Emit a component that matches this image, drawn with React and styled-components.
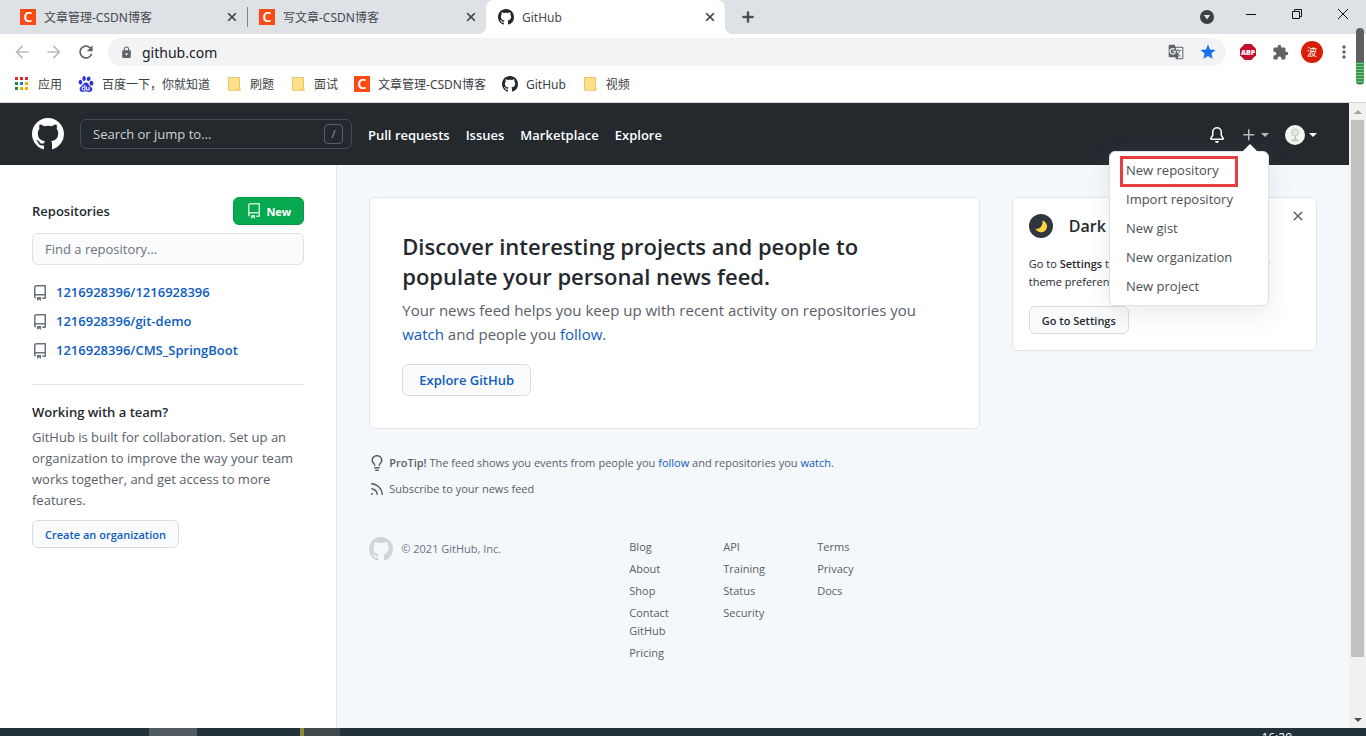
import React from "react";
import styled, { createGlobalStyle } from "styled-components";
import {
    MdAdd,
    MdArrowBack,
    MdArrowForward,
    MdClose,
    MdExtension,
    MdGTranslate,
    MdLock,
    MdMoreVert,
    MdRefresh,
    MdStar,
} from "react-icons/md";
import { SiBaidu } from "react-icons/si";

const tabs = [
    { title: "文章管理-CSDN博客", icon: "csdn" },
    { title: "写文章-CSDN博客", icon: "csdn" },
    { title: "GitHub", icon: "github", active: true },
];

const bookmarks = [
    { title: "应用", icon: "apps" },
    { title: "百度一下，你就知道", icon: "baidu" },
    { title: "刷题", icon: "folder" },
    { title: "面试", icon: "folder" },
    { title: "文章管理-CSDN博客", icon: "csdn" },
    { title: "GitHub", icon: "github" },
    { title: "视频", icon: "folder" },
];

const repos = ["1216928396/1216928396", "1216928396/git-demo", "1216928396/CMS_SpringBoot"];

const menuItems = [
    "New repository",
    "Import repository",
    "New gist",
    "New organization",
    "New project",
];

const footerLinks = [
    ["Blog", "About", "Shop", "Contact GitHub", "Pricing"],
    ["API", "Training", "Status", "Security"],
    ["Terms", "Privacy", "Docs"],
];

const appColors = [
    "#d93025", "#d93025", "#d93025",
    "#1e8e3e", "#1a73e8", "#f9ab00",
    "#1e8e3e", "#f9ab00", "#f9ab00",
];

const iconPaths = {
    github: "M8 0C3.58 0 0 3.58 0 8c0 3.54 2.29 6.53 5.47 7.59.4.07.55-.17.55-.38 0-.19-.01-.82-.01-1.49-2.01.37-2.53-.49-2.69-.94-.09-.23-.48-.94-.82-1.13-.28-.15-.68-.52-.01-.53.63-.01 1.08.58 1.23.82.72 1.21 1.87.87 2.33.66.07-.52.28-.87.51-1.07-1.78-.2-3.64-.89-3.64-3.95 0-.87.31-1.59.82-2.15-.08-.2-.36-1.02.08-2.12 0 0 .67-.21 2.2.82.64-.18 1.32-.27 2-.27s1.36.09 2 .27c1.53-1.04 2.2-.82 2.2-.82.44 1.1.16 1.92.08 2.12.51.56.82 1.27.82 2.15 0 3.07-1.87 3.75-3.65 3.95.29.25.54.73.54 1.48 0 1.07-.01 1.93-.01 2.2 0 .21.15.46.55.38A8.01 8.01 0 0 0 16 8c0-4.42-3.58-8-8-8z",
    repo: "M2 2.5A2.5 2.5 0 014.5 0h8.75a.75.75 0 01.75.75v12.5a.75.75 0 01-.75.75h-2.5a.75.75 0 110-1.5h1.75v-2h-8a1 1 0 00-.714 1.7.75.75 0 01-1.072 1.05A2.495 2.495 0 012 11.5v-9zm10.5-1V9h-8c-.356 0-.694.074-1 .208V2.5a1 1 0 011-1h8zM5 12.25v3.25a.25.25 0 00.4.2l1.45-1.087a.25.25 0 01.3 0L8.6 15.7a.25.25 0 00.4-.2v-3.25a.25.25 0 00-.25-.25h-3.5a.25.25 0 00-.25.25z",
    bell: "M8 16a2 2 0 001.985-1.75c.017-.137-.097-.25-.235-.25h-3.5c-.138 0-.252.113-.235.25A2 2 0 008 16zM8 1.5A3.5 3.5 0 004.5 5v2.947c0 .346-.102.683-.294.97l-1.703 2.556a.018.018 0 00-.003.01l.001.006c0 .002.002.004.004.006a.017.017 0 00.006.004l.007.001h10.964l.007-.001a.016.016 0 00.006-.004.016.016 0 00.004-.006l.001-.007a.017.017 0 00-.003-.01l-1.703-2.554a1.75 1.75 0 01-.294-.97V5A3.5 3.5 0 008 1.5zM3 5a5 5 0 0110 0v2.947c0 .05.015.098.042.139l1.703 2.555A1.518 1.518 0 0113.482 13H2.518a1.518 1.518 0 01-1.263-2.36l1.703-2.554A.25.25 0 003 7.947V5z",
    plus: "M7.75 2a.75.75 0 01.75.75V7h4.25a.75.75 0 110 1.5H8.5v4.25a.75.75 0 11-1.5 0V8.5H2.75a.75.75 0 010-1.5H7V2.75A.75.75 0 017.75 2z",
    rss: "M2.002 2.725a.75.75 0 01.797-.699C8.79 2.42 13.58 7.21 13.974 13.201a.75.75 0 11-1.497.098 10.502 10.502 0 00-9.776-9.776.747.747 0 01-.7-.798zM2 13a1 1 0 112 0 1 1 0 01-2 0zm.84-5.95a.75.75 0 00-.179 1.489c2.509.3 4.5 2.291 4.8 4.8a.75.75 0 101.49-.178A7.003 7.003 0 002.838 7.05z",
    close: "M3.72 3.72a.75.75 0 011.06 0L8 6.94l3.22-3.22a.75.75 0 111.06 1.06L9.06 8l3.22 3.22a.75.75 0 11-1.06 1.06L8 9.06l-3.22 3.22a.75.75 0 01-1.06-1.06L6.94 8 3.72 4.78a.75.75 0 010-1.06z",
    bulb: "M8 1.5c-2.363 0-4 1.69-4 3.75 0 .984.424 1.625.984 2.304l.214.253c.223.264.47.556.673.848.284.411.537.896.621 1.49a.75.75 0 01-1.484.211c-.04-.282-.163-.547-.37-.847a8.695 8.695 0 00-.542-.68c-.084-.1-.173-.205-.268-.32C3.201 7.75 2.5 6.766 2.5 5.25 2.5 2.31 4.863 0 8 0s5.5 2.31 5.5 5.25c0 1.516-.701 2.5-1.328 3.259-.095.115-.184.22-.268.319-.207.245-.383.453-.541.681-.208.3-.33.565-.37.847a.75.75 0 01-1.485-.212c.084-.593.337-1.078.621-1.489.203-.292.45-.584.673-.848.075-.088.147-.173.213-.253.561-.679.985-1.32.985-2.304 0-2.06-1.637-3.75-4-3.75zM6 15.25a.75.75 0 01.75-.75h2.5a.75.75 0 010 1.5h-2.5a.75.75 0 01-.75-.75zM5.75 12a.75.75 0 000 1.5h4.5a.75.75 0 000-1.5h-4.5z",
};

const Octicon = ({ name, size = 16, color = "currentColor" }) => (
    <svg width={size} height={size} viewBox="0 0 16 16" fill={color} aria-hidden="true">
        <path fillRule="evenodd" d={iconPaths[name]} />
    </svg>
);

const SiteIcon = ({ name }) => {
    if (name === "csdn") return <CsdnIcon aria-hidden="true">C</CsdnIcon>;
    if (name === "github") return <Octicon name="github" color="#24292e" />;
    if (name === "baidu") return <SiBaidu size={16} color="#2932e1" />;
    if (name === "apps") {
        return (
            <svg width="16" height="16" viewBox="0 0 16 16">
                {appColors.map((color, i) => (
                    <rect
                        key={i}
                        x={1 + (i % 3) * 5}
                        y={1 + Math.floor(i / 3) * 5}
                        width="3"
                        height="3"
                        fill={color}
                    />
                ))}
            </svg>
        );
    }
    return (
        <svg width="16" height="16" viewBox="0 0 16 16">
            <path d="M2.5 1.5h11v9l.8 3.8H2.5z" fill="#fde08a" stroke="#e8c765" />
            <path d="M12.5 10l1.8 4.3h-3z" fill="#f3cf6b" />
        </svg>
    );
};

const BrowserChrome = () => (
    <Chrome>
        <TabStrip>
            {tabs.map(tab => (
                <Tab key={tab.title} $active={tab.active}>
                    <SiteIcon name={tab.icon} />
                    <TabTitle>{tab.title}</TabTitle>
                    <TabButton aria-label="Close tab">
                        <MdClose size={14} />
                    </TabButton>
                </Tab>
            ))}
            <NewTab aria-label="New tab">
                <MdAdd size={18} />
            </NewTab>
            <TabSearch aria-label="Search tabs">
                <svg width="14" height="14" viewBox="0 0 14 14">
                    <circle cx="7" cy="7" r="7" fill="#3c4043" />
                    <path d="M3.8 5h6.4L7 9.6z" fill="#dee1e6" />
                </svg>
            </TabSearch>
            <WindowButton aria-label="Minimize">
                <svg width="12" height="12" stroke="#111">
                    <path d="M1 6.5h10" />
                </svg>
            </WindowButton>
            <WindowButton aria-label="Restore">
                <svg width="12" height="12" fill="none" stroke="#111">
                    <path d="M1.5 3.5h7v7h-7zM3.5 3.5v-2h7v7h-2" />
                </svg>
            </WindowButton>
            <WindowButton aria-label="Close">
                <svg width="12" height="12" stroke="#111">
                    <path d="M1 1l10 10M11 1L1 11" />
                </svg>
            </WindowButton>
        </TabStrip>
        <Toolbar>
            <ToolButton aria-label="Back" $muted>
                <MdArrowBack size={20} />
            </ToolButton>
            <ToolButton aria-label="Forward" $muted>
                <MdArrowForward size={20} />
            </ToolButton>
            <ToolButton aria-label="Reload">
                <MdRefresh size={20} />
            </ToolButton>
            <AddressBar>
                <MdLock size={13} color="#5f6368" />
                <AddressInput aria-label="Address" defaultValue="github.com" />
                <ToolButton aria-label="Translate">
                    <MdGTranslate size={16} />
                </ToolButton>
                <ToolButton aria-label="Bookmark" $blue>
                    <MdStar size={18} />
                </ToolButton>
            </AddressBar>
            <ToolButton aria-label="Adblock Plus">
                <svg width="16" height="16" viewBox="0 0 16 16">
                    <path d="M4.7 0h6.6L16 4.7v6.6L11.3 16H4.7L0 11.3V4.7z" fill="#c70d2c" />
                    <text
                        x="8"
                        y="11"
                        textAnchor="middle"
                        fontFamily="Open Sans, sans-serif"
                        fontSize="7"
                        fontWeight="800"
                        fill="#fff"
                    >
                        ABP
                    </text>
                </svg>
            </ToolButton>
            <ToolButton aria-label="Extensions">
                <MdExtension size={17} />
            </ToolButton>
            <ToolButton aria-label="Profile">
                <Profile>波</Profile>
            </ToolButton>
            <ToolButton aria-label="More">
                <MdMoreVert size={20} />
            </ToolButton>
        </Toolbar>
        <Bookmarks>
            {bookmarks.map((mark, i) => (
                <Bookmark key={i} href="#">
                    <SiteIcon name={mark.icon} />
                    {mark.title}
                </Bookmark>
            ))}
        </Bookmarks>
        <Meter />
    </Chrome>
);

const Header = () => (
    <HeaderBar>
        <HeaderLink href="#" aria-label="Home">
            <Octicon name="github" size={32} />
        </HeaderLink>
        <SearchBox>
            <SearchInput aria-label="Search" placeholder="Search or jump to…" />
            <SlashKey>/</SlashKey>
        </SearchBox>
        <HeaderNav>
            <HeaderLink href="#">Pull requests</HeaderLink>
            <HeaderLink href="#">Issues</HeaderLink>
            <HeaderLink href="#">Marketplace</HeaderLink>
            <HeaderLink href="#">Explore</HeaderLink>
        </HeaderNav>
        <HeaderActions>
            <HeaderButton aria-label="Notifications">
                <Octicon name="bell" />
            </HeaderButton>
            <CreateWrap>
                <HeaderButton aria-label="Create new" $dim>
                    <Octicon name="plus" />
                    <Caret />
                </HeaderButton>
                <CreateMenu>
                    {menuItems.map((item, i) => (
                        <li key={item}>
                            <MenuLink href="#" $marked={i === 0}>
                                {item}
                            </MenuLink>
                        </li>
                    ))}
                </CreateMenu>
            </CreateWrap>
            <HeaderButton aria-label="Account">
                <svg width="20" height="20" viewBox="0 0 20 20">
                    <circle cx="10" cy="10" r="10" fill="#f4f6f2" />
                    <circle cx="10" cy="7.5" r="3.5" fill="#e3e6df" stroke="#c3c8bf" />
                    <path d="M9 11h2v3H9zM6.5 14h7v2.5h-7z" fill="#c9cdc6" />
                </svg>
                <Caret />
            </HeaderButton>
        </HeaderActions>
    </HeaderBar>
);

const Sidebar = () => (
    <Side>
        <SideTop>
            <SideTitle>Repositories</SideTitle>
            <Button $primary>
                <Octicon name="repo" color="#c8ecd6" />
                New
            </Button>
        </SideTop>
        <FindInput aria-label="Find a repository" placeholder="Find a repository…" />
        <RepoList>
            {repos.map(repo => (
                <RepoItem key={repo}>
                    <Octicon name="repo" color="#6a737d" />
                    <Link href="#">{repo}</Link>
                </RepoItem>
            ))}
        </RepoList>
        <Team>
            <SideTitle>Working with a team?</SideTitle>
            <TeamText>
                GitHub is built for collaboration. Set up an organization to improve the way your
                team works together, and get access to more features.
            </TeamText>
            <Button $link>Create an organization</Button>
        </Team>
    </Side>
);

const Feed = () => (
    <div>
        <Discover>
            <DiscoverTitle>
                Discover interesting projects and people to populate your personal news feed.
            </DiscoverTitle>
            <DiscoverText>
                Your news feed helps you keep up with recent activity on repositories you{" "}
                <Link href="#">watch</Link> and people you <Link href="#">follow</Link>.
            </DiscoverText>
            <Button $link $large>
                Explore GitHub
            </Button>
        </Discover>
        <Tips>
            <Tip>
                <Octicon name="bulb" />
                <span>
                    <strong>ProTip!</strong> The feed shows you events from people you{" "}
                    <Link href="#">follow</Link> and repositories you <Link href="#">watch</Link>.
                </span>
            </Tip>
            <Tip>
                <Octicon name="rss" />
                <MutedLink href="#">Subscribe to your news feed</MutedLink>
            </Tip>
        </Tips>
        <Footer>
            <Copyright>
                <Octicon name="github" size={24} color="#d1d5da" />
                © 2021 GitHub, Inc.
            </Copyright>
            {footerLinks.map(column => (
                <FooterList key={column[0]}>
                    {column.map(item => (
                        <li key={item}>
                            <MutedLink href="#">{item}</MutedLink>
                        </li>
                    ))}
                </FooterList>
            ))}
        </Footer>
    </div>
);

const Notice = () => (
    <NoticeCard>
        <NoticeTop>
            <svg width="24" height="24" viewBox="0 0 24 24">
                <circle cx="12" cy="12" r="12" fill="#2f363d" />
                <path d="M13.5 6.5a6 6 0 1 1-7 8.2c4 .8 7.7-3 7-8.2z" fill="#ffd33d" />
            </svg>
            <NoticeTitle>Dark mode</NoticeTitle>
            <Dismiss aria-label="Dismiss">
                <Octicon name="close" />
            </Dismiss>
        </NoticeTop>
        <NoticeText>
            Go to <strong>Settings</strong> to preview and personalize your theme preference.
        </NoticeText>
        <Button>Go to Settings</Button>
    </NoticeCard>
);

const App = () => (
    <Screen>
        <GlobalStyle />
        <BrowserChrome />
        <Viewport>
            <Page>
                <Header />
                <Body>
                    <Sidebar />
                    <Main>
                        <Feed />
                        <Notice />
                    </Main>
                </Body>
            </Page>
            <Scrollbar>
                <Arrow $up />
                <Thumb />
                <Arrow />
            </Scrollbar>
        </Viewport>
        <Taskbar>
            <TaskItem $left={149} $width={48} $color="#515a60" />
            <TaskItem $left={103} $width={4} $color="#8b8a3c" />
            <TaskItem $left={0} $width={36} $color="#40484c" />
            <Clock>16:20</Clock>
        </Taskbar>
    </Screen>
);

export default App;

const GlobalStyle = createGlobalStyle`
    * {
        box-sizing: border-box;
    }
    body {
        margin: 0;
        color: #24292e;
        font: 13px/21px "Open Sans", "Noto Sans CJK SC", sans-serif;
    }
    button, input {
        font: inherit;
        color: inherit;
        padding: 0;
        border: none;
        background: none;
    }
    ul, h2, h3, p {
        margin: 0;
        padding: 0;
        list-style: none;
    }
    strong {
        font-weight: 600;
    }
    svg {
        flex-shrink: 0;
    }
`;

const Screen = styled.div`
    height: 100vh;
    display: flex;
    flex-direction: column;
    overflow: hidden;
`;

const Chrome = styled.div`
    position: relative;
    flex-shrink: 0;
    background: #fff;
    border-bottom: 1px solid #d5d7da;
    font-family: "Noto Sans", "Noto Sans CJK SC", sans-serif;
`;

const TabStrip = styled.div`
    display: flex;
    height: 34px;
    padding-left: 8px;
    background: #dee1e6;
`;

const Tab = styled.div`
    position: relative;
    display: flex;
    align-items: center;
    gap: 8px;
    width: 239px;
    padding: 0 8px 0 12px;
    font-size: 12px;
    color: #45494d;
    background: ${({ $active }) => ($active ? "#fff" : "none")};
    border-radius: 8px 8px 0 0;

    & + &::before {
        content: "";
        position: absolute;
        left: 0;
        top: 7px;
        width: 1px;
        height: 20px;
        background: ${({ $active }) => ($active ? "none" : "#808388")};
    }

    &::after {
        content: "";
        display: ${({ $active }) => ($active ? "block" : "none")};
        position: absolute;
        inset: auto -8px 0;
        height: 8px;
        background: radial-gradient(circle at 0 0, transparent 8px, #fff 8px) 0 0 / 8px 8px no-repeat,
            radial-gradient(circle at 100% 0, transparent 8px, #fff 8px) 100% 0 / 8px 8px no-repeat;
    }
`;

const TabTitle = styled.span`
    flex: 1;
`;

const TabButton = styled.button`
    display: flex;
    color: #3c4043;

    path:last-child {
        stroke: currentColor;
        stroke-width: 1px;
    }
`;

const NewTab = styled(TabButton)`
    align-items: center;
    margin: 0 auto 0 14px;
`;

const TabSearch = styled.button`
    display: flex;
    align-items: center;
    margin-right: 14px;
`;

const WindowButton = styled.button`
    display: flex;
    align-items: center;
    justify-content: center;
    width: 46px;
    height: 28px;
`;

const Toolbar = styled.div`
    display: flex;
    align-items: center;
    height: 36px;
    padding: 0 6px;
`;

const ToolButton = styled.button`
    display: flex;
    align-items: center;
    justify-content: center;
    width: 32px;
    height: 28px;
    color: ${({ $muted, $blue }) => ($muted ? "#babcbe" : $blue ? "#1a73e8" : "#5f6368")};
`;

const AddressBar = styled.div`
    flex: 1;
    display: flex;
    align-items: center;
    height: 28px;
    margin: 0 6px;
    padding: 0 2px 0 12px;
    border-radius: 14px;
    background: #f1f3f4;
`;

const AddressInput = styled.input`
    flex: 1;
    padding-left: 9px;
    color: #202124;
    font-size: 14px;
`;

const Profile = styled.span`
    width: 22px;
    border-radius: 50%;
    background: #d81e06;
    color: #fff;
    font-size: 10px;
    line-height: 22px;
`;

const CsdnIcon = styled.span`
    width: 16px;
    height: 16px;
    background: #fc4a14;
    color: #fff;
    font-size: 14px;
    font-weight: 600;
    line-height: 16px;
    text-align: center;
`;

const Bookmarks = styled.nav`
    display: flex;
    align-items: center;
    gap: 16px;
    height: 32px;
    padding: 0 14px 4px;
`;

const Bookmark = styled.a`
    display: flex;
    align-items: center;
    gap: 8px;
    color: #3c4043;
    font-size: 12px;
    text-decoration: none;
`;

/* load gauge floating over the window edge */
const Meter = styled.div`
    position: absolute;
    top: 28px;
    right: 2px;
    width: 8px;
    height: 57px;
    border-radius: 4px;
    background: linear-gradient(#5f5f5f 34px, transparent 34px),
        repeating-linear-gradient(#3f8f4f 0 2px, #6fd07f 2px 3px);
`;

const Viewport = styled.div`
    flex: 1;
    display: flex;
    min-height: 0;
`;

const Page = styled.div`
    flex: 1;
    display: flex;
    flex-direction: column;
    background: #f4f8fb;
`;

const HeaderBar = styled.header`
    display: flex;
    align-items: center;
    gap: 16px;
    height: 62px;
    padding: 0 32px;
    background: #24292e;
    color: #fff;
`;

const HeaderLink = styled.a`
    display: flex;
    color: #fff;
    font-weight: 600;
    text-decoration: none;
`;

const HeaderNav = styled.nav`
    display: flex;
    gap: 16px;
    padding-top: 2px;
`;

const SearchBox = styled.div`
    display: flex;
    align-items: center;
    width: 272px;
    height: 30px;
    padding: 0 8px 0 12px;
    border: 1px solid #444a50;
    border-radius: 6px;
`;

const SearchInput = styled.input`
    flex: 1;
    min-width: 0;

    &::placeholder {
        color: #d0d2d4;
    }
`;

const SlashKey = styled.kbd`
    width: 19px;
    border: 1px solid #5b6066;
    border-radius: 4px;
    color: #9a9fa4;
    font: 11px/18px "Open Sans", sans-serif;
    text-align: center;
`;

const HeaderActions = styled.div`
    display: flex;
    align-items: center;
    gap: 16px;
    margin-left: auto;
    padding-top: 2px;
`;

const HeaderButton = styled.button`
    display: flex;
    align-items: center;
    gap: 4px;
    color: ${({ $dim }) => ($dim ? "#b8babc" : "#fff")};
`;

const Caret = styled.span`
    border: 4px solid transparent;
    border-top-color: currentColor;
    border-bottom-width: 0;
`;

const CreateWrap = styled.div`
    position: relative;
`;

const CreateMenu = styled.ul`
    position: absolute;
    z-index: 1;
    top: 24px;
    right: 0;
    width: 160px;
    padding: 4px 0;
    border: 1px solid #dfe3e7;
    border-radius: 6px;
    background: #fff;
    box-shadow: 0 8px 24px rgba(149, 157, 165, 0.2);

    &::before {
        content: "";
        position: absolute;
        top: -8px;
        right: 10px;
        border: 8px solid transparent;
        border-top-width: 0;
        border-bottom-color: #fff;
    }
`;

const MenuLink = styled.a`
    position: relative;
    display: block;
    padding: 4px 16px;
    color: #4a4f54;
    text-decoration: none;

    &::after {
        content: "";
        display: ${({ $marked }) => ($marked ? "block" : "none")};
        position: absolute;
        inset: 0 30px -2px 10px;
        border: 3px solid #e53e3e;
    }
`;

const Body = styled.div`
    flex: 1;
    display: flex;
`;

const Side = styled.aside`
    width: 25%;
    padding: 32px;
    background: #fff;
    border-right: 1px solid #e1e4e8;
`;

const SideTop = styled.div`
    display: flex;
    align-items: center;
    justify-content: space-between;
    margin-bottom: 8px;
`;

const SideTitle = styled.h2`
    font-size: 13px;
    font-weight: 600;
`;

const Button = styled.button`
    display: inline-flex;
    align-items: center;
    gap: 4px;
    height: ${({ $large }) => ($large ? "32px" : "28px")};
    padding: ${({ $large }) => ($large ? "0 16px" : "0 12px")};
    border: 1px solid ${({ $primary }) => ($primary ? "#0b9549" : "#d9dce0")};
    border-radius: 6px;
    background: ${({ $primary }) => ($primary ? "#06a850" : "#fafbfc")};
    color: ${({ $primary, $link }) => ($primary ? "#fff" : $link ? "#0d5cbf" : "#24292e")};
    font-size: ${({ $large }) => ($large ? "13px" : "11px")};
    font-weight: ${({ $primary }) => ($primary ? 700 : 600)};
`;

const FindInput = styled.input`
    display: block;
    width: 100%;
    height: 32px;
    padding: 0 12px;
    border: 1px solid #dfe2e6;
    border-radius: 6px;
    background: #fafbfc;

    &::placeholder {
        color: #6a737d;
    }
`;

const RepoList = styled.ul`
    display: grid;
    gap: 8px;
    padding: 17px 0 23px;
    border-bottom: 1px solid #e1e4e8;
`;

const RepoItem = styled.li`
    display: flex;
    align-items: center;
    gap: 8px;
    font-weight: 600;
`;

const Link = styled.a`
    color: #0d5cbf;
    text-decoration: none;
`;

const Team = styled.section`
    padding-top: 17px;
`;

const TeamText = styled.p`
    margin: 4px 0 9px;
    color: #586069;
`;

const Main = styled.main`
    flex: 1;
    display: grid;
    grid-template-columns: minmax(0, 2fr) minmax(0, 1fr);
    align-items: start;
    gap: 32px;
    padding: 32px;
`;

const Discover = styled.section`
    padding: 33px 32px 32px;
    border: 1px solid #e1e4e8;
    border-radius: 6px;
    background: #fff;
`;

const DiscoverTitle = styled.h2`
    margin-bottom: 7px;
    font-size: 22px;
    font-weight: 600;
    line-height: 30px;
`;

const DiscoverText = styled.p`
    margin-bottom: 18px;
    color: #586069;
    font-size: 15px;
    line-height: 24px;
`;

const Tips = styled.div`
    display: grid;
    gap: 8px;
    padding: 25px 0 39px;
`;

const Tip = styled.div`
    display: flex;
    align-items: center;
    gap: 4px;
    color: #586069;
    font-size: 11px;
    line-height: 18px;
`;

const MutedLink = styled.a`
    color: #586069;
    text-decoration: none;
`;

const Footer = styled.footer`
    display: grid;
    grid-template-columns: 260px 94px 94px 94px;
    align-items: start;
    font-size: 11px;
    line-height: 18px;
`;

const Copyright = styled.div`
    display: flex;
    align-items: center;
    gap: 8px;
    color: #6a737d;
`;

const FooterList = styled.ul`
    display: grid;
    gap: 4px;
    padding: 1px 32px 0 0;
`;

const NoticeCard = styled.aside`
    padding: 16px;
    border: 1px solid #e1e4e8;
    border-radius: 6px;
    background: #fff;
`;

const NoticeTop = styled.div`
    display: flex;
    align-items: center;
    gap: 16px;
    margin-bottom: 17px;
`;

const NoticeTitle = styled.h3`
    flex: 1;
    font-size: 16px;
    font-weight: 600;
    line-height: 24px;
`;

const Dismiss = styled.button`
    display: flex;
    align-self: flex-start;
    margin: -6px -6px 0 0;
    color: #586069;
`;

const NoticeText = styled.p`
    margin-bottom: 15px;
    font-size: 11px;
    line-height: 18px;
`;

const Scrollbar = styled.div`
    display: flex;
    flex-direction: column;
    width: 17px;
    padding: 0 2px;
    background: #f1f1f1;
`;

const Thumb = styled.div`
    flex: 1;
    margin-bottom: 54px;
    background: #c1c1c1;
`;

const Arrow = styled.span`
    height: 17px;
    display: grid;
    place-items: center;

    &::before {
        content: "";
        border: 4px solid transparent;
        border-${({ $up }) => ($up ? "bottom" : "top")}-color: ${({ $up }) => ($up ? "#a3a3a3" : "#505050")};
        border-${({ $up }) => ($up ? "top" : "bottom")}-width: 0;
    }
`;

const Taskbar = styled.footer`
    flex-shrink: 0;
    display: flex;
    height: 8px;
    overflow: hidden;
    background: #22313a;
`;

const TaskItem = styled.span`
    width: ${({ $width }) => $width}px;
    margin-left: ${({ $left }) => $left}px;
    background: ${({ $color }) => $color};
`;

const Clock = styled.time`
    margin: 2px 74px 0 auto;
    color: #fff;
    font-size: 12px;
    line-height: 16px;
`;
